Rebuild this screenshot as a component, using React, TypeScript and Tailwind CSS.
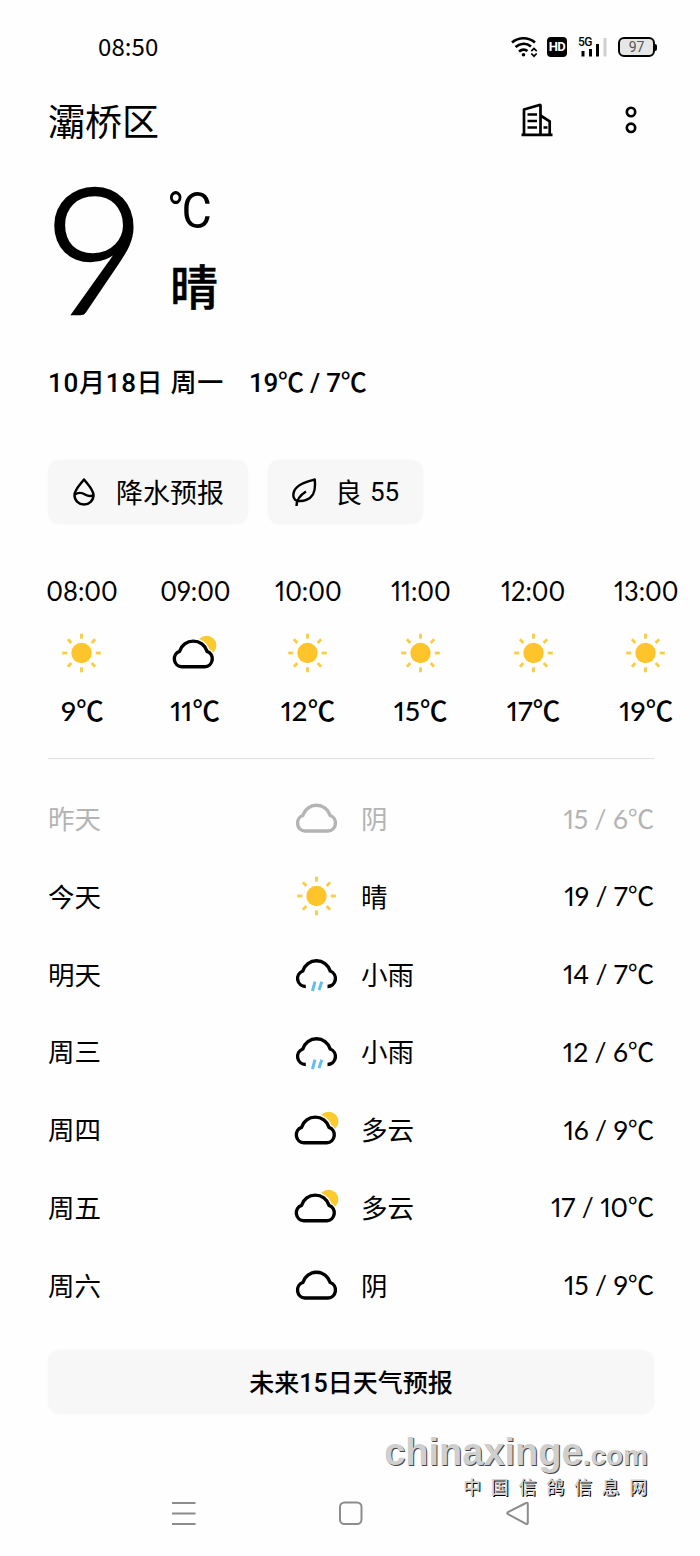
import { clsx } from "clsx";

type Weather = "sunny" | "cloudy" | "partly" | "rain";

interface Hour {
  time: string;
  weather: Weather;
  temp: string;
}

interface Day {
  name: string;
  weather: Weather;
  label: string;
  range: string;
  past?: boolean;
}

const HOURS: Hour[] = [
  { time: "08:00", weather: "sunny", temp: "9℃" },
  { time: "09:00", weather: "partly", temp: "11℃" },
  { time: "10:00", weather: "sunny", temp: "12℃" },
  { time: "11:00", weather: "sunny", temp: "15℃" },
  { time: "12:00", weather: "sunny", temp: "17℃" },
  { time: "13:00", weather: "sunny", temp: "19℃" },
];

const DAYS: Day[] = [
  { name: "昨天", weather: "cloudy", label: "阴", range: "15 / 6℃", past: true },
  { name: "今天", weather: "sunny", label: "晴", range: "19 / 7℃" },
  { name: "明天", weather: "rain", label: "小雨", range: "14 / 7℃" },
  { name: "周三", weather: "rain", label: "小雨", range: "12 / 6℃" },
  { name: "周四", weather: "partly", label: "多云", range: "16 / 9℃" },
  { name: "周五", weather: "partly", label: "多云", range: "17 / 10℃" },
  { name: "周六", weather: "cloudy", label: "阴", range: "15 / 9℃" },
];

const CLOUD = "M12 33H35A8 8 0 0 0 37.2 17.5A14.3 14.3 0 0 0 9.8 17.5A8 8 0 0 0 12 33Z";

function WeatherIcon({ type }: { type: Weather }) {
  return (
    <svg viewBox="0 0 48 40" className="h-10 w-12 shrink-0" fill="none">
      {type === "sunny" && (
        <g>
          <circle cx="23.5" cy="20" r="10.2" fill="#fdc52b" />
          {[0, 45, 90, 135, 180, 225, 270, 315].map(a => (
            <path key={a} d="M23.5 0.7v5" stroke="#f8cd46" strokeWidth="2.8" transform={`rotate(${a} 23.5 20)`} />
          ))}
        </g>
      )}
      {type === "cloudy" && <path d={CLOUD} stroke="currentColor" strokeWidth="3.4" />}
      {type === "partly" && (
        <g>
          <circle cx="35.6" cy="12.5" r="9.8" fill="#fbca2e" />
          <g transform="translate(-1.2 0.8)">
            <path d={CLOUD} fill="white" stroke="white" strokeWidth="6" />
            <path d={CLOUD} stroke="currentColor" strokeWidth="3.4" />
          </g>
        </g>
      )}
      {type === "rain" && (
        <g transform="translate(0 -0.5)">
          <path d="M34.5 33A8 8 0 0 0 37.2 17.5A14.3 14.3 0 0 0 9.8 17.5A8 8 0 0 0 12.8 33" stroke="currentColor" strokeWidth="3.4" />
          <path d="M22 28.2l-2.6 9.4M28.8 28.2l-2.8 8.4" stroke="#63bdf0" strokeWidth="3" />
        </g>
      )}
    </svg>
  );
}

function StatusBar() {
  return (
    <div className="flex h-[94px] items-center justify-between pl-[98px] pr-[43px]">
      <span className="-mt-[2px] font-['Noto_Sans_CJK_SC',sans-serif] text-[24px] tracking-[0.1px]">08:50</span>
      <div className="flex items-center">
        <svg viewBox="0 0 27 22" className="h-[22px] w-[27px]" fill="none" stroke="black" strokeWidth="2.7">
          <path d="M1 6.5C7.5.8 17.500.8 24 6.500M4.500 11C9.500 7 15.500 7 20 10.500M8 15.500c3-2.400 6-2.400 8.500-.5" />
          <circle cx="12.500" cy="18.800" r="1.800" fill="black" stroke="none" />
          <path d="M20.300 15.200l2.700-2.700 2.700 2.700M20.300 17.500l2.700 2.700 2.700-2.700" strokeWidth="1.700" />
        </svg>
        <span className="ml-[9px] flex h-5 w-5 items-center justify-center rounded-[4px] bg-black font-['Roboto',sans-serif] text-[13px] font-bold tracking-[-0.5px] text-white">
          HD
        </span>
        <div className="relative ml-[11px] h-[22px] w-[29px]">
          <span className="absolute top-0 left-0 font-['Roboto',sans-serif] text-[12px] leading-[12px] font-medium tracking-[-0.5px]">5G</span>
          <svg viewBox="0 0 29 22" className="h-full w-full">
            <path d="M5 15v5.500M12.500 13v7.500M19.500 8v12.500" stroke="black" strokeWidth="3" />
            <path d="M27 2v18.500" stroke="#d0d0d0" strokeWidth="3" />
          </svg>
        </div>
        <div className="ml-[11px] flex items-center">
          <span className="flex h-5 w-[37px] items-center justify-center rounded-[6px] border-2 border-black bg-[#e6e6e6] font-['Roboto',sans-serif] text-[14px] text-[#555]">
            97
          </span>
          <span className="h-[7px] w-[2px] rounded-r-sm bg-black" />
        </div>
      </div>
    </div>
  );
}

function Header() {
  return (
    <div className="flex h-[54px] items-center pr-[63px] pl-12">
      <h1 className="-mt-[2px] flex-1 text-[37px] leading-none font-normal">灞桥区</h1>
      <svg viewBox="0 0 32 34" className="-mt-[2px] h-[34px] w-8" fill="none" stroke="black" strokeWidth="2.700" strokeLinejoin="round">
        <path d="M.5 31.800h31M3 31.500V6.500L18.500 2q1-.3 1 .8v28.700M19.500 12.500l9.200 5.800v13.200" />
        <path d="M6.500 11.500h9.500M6.500 18h9.500M6.500 24.500h9.500M22.500 24.500h4" strokeWidth="2.400" />
      </svg>
      <svg viewBox="0 0 12 28" className="-mt-[2px] ml-[72px] h-7 w-3" fill="none" stroke="black" strokeWidth="2.600">
        <circle cx="6" cy="6" r="4.200" />
        <circle cx="6" cy="21.800" r="4.200" />
      </svg>
    </div>
  );
}

function Current() {
  return (
    <div className="flex h-[205px] pl-[44px]">
      <span className="mt-[10px] w-[123px] font-['Lato',sans-serif] text-[175px] leading-[177px] font-light [-webkit-text-stroke:2.5px_black]">9</span>
      <div className="flex flex-col pt-[37px]">
        <span className="origin-left scale-x-93 font-['Roboto',sans-serif] text-[50px] leading-[52px] tracking-[-3px]">°C</span>
        <span className="mt-[23px] ml-[3px] text-[48px] leading-[48px] font-medium [-webkit-text-stroke:0.5px_black]">晴</span>
      </div>
    </div>
  );
}

function Chips() {
  return (
    <div className="flex gap-5 pl-12">
      <button className="flex h-16 w-[200px] items-center rounded-xl bg-[#f7f7f7] pl-[25px] shadow-[0_0_3px_#f7f7f7]">
        <svg viewBox="0 0 24 30" className="h-[30px] w-6" fill="none" stroke="black" strokeWidth="2.500" strokeLinejoin="round">
          <path d="M11 2.500C7.500 7 1.500 12.500 1.500 18.200a9.500 9.300 0 0 0 19 0C20.500 12.500 14.500 7 11 2.500Z" />
          <path d="M2 17.500c4.500-3 7.500-1.500 10.500.3s5 1.800 8 .2" />
        </svg>
        <span className="ml-[19px] text-[27px]">降水预报</span>
      </button>
      <button className="flex h-16 w-[155px] items-center rounded-xl bg-[#f7f7f7] pl-[24px] shadow-[0_0_3px_#f7f7f7]">
        <svg viewBox="0 0 26 30" className="h-[30px] w-[26px]" fill="none" stroke="black" strokeWidth="2.400" strokeLinejoin="round">
          <path d="M22.700 2.500C15.500 4.500 5 7 2 14.500c-1.500 4.500-.3 8.500 3.500 9.300 6 1 12.500-1.500 15.500-6.500 2.500-4.500 2.300-9.500 1.700-14.800Z" />
          <path d="M4.500 29c0-6 3-10.500 9.500-14.500" />
        </svg>
        <span className="ml-[17px] text-[27px]">良</span>
        <span className="ml-[8px] font-['Roboto',sans-serif] text-[26px]">55</span>
      </button>
    </div>
  );
}

function Hourly() {
  return (
    <div className="ml-[26px] flex h-[182px]">
      {HOURS.map(h => (
        <div key={h.time} className="flex w-[112.8px] shrink-0 flex-col items-center font-['Lato','Noto_Sans_CJK_SC',sans-serif] proportional-nums">
          <span className="scale-x-94 text-[27px] leading-[30px]">{h.time}</span>
          <div className="mt-[27px] mb-[23px]">
            <WeatherIcon type={h.weather} />
          </div>
          <span className="text-[27.5px] leading-[30px] font-medium tracking-[0.2px]">{h.temp}</span>
        </div>
      ))}
    </div>
  );
}

function Daily() {
  return (
    <div className="mt-[21px] pr-[46px] pl-12">
      {DAYS.map(d => (
        <div key={d.name} className={clsx("flex h-[77.75px] items-center text-[26.5px]", d.past && "text-[#b4b4b4]")}>
          <span className="-mt-[2px] w-[245px]">{d.name}</span>
          <div className="-mt-px">
            <WeatherIcon type={d.weather} />
          </div>
          <span className="-mt-[2px] ml-[20px] flex-1">{d.label}</span>
          <span className="mt-px font-['Lato','Noto_Sans_CJK_SC',sans-serif] text-[26.5px] tracking-[-0.2px] proportional-nums">{d.range}</span>
        </div>
      ))}
    </div>
  );
}

function NavBar() {
  return (
    <div className="mt-[84px] flex h-[30px] items-center pl-[171px] text-[#8c8c8c]">
      <svg viewBox="0 0 25 25" className="h-[25px] w-[25px]" fill="none" stroke="currentColor" strokeWidth="2">
        <path d="M1 2h23.500M1 12.500h23.500M1 23h23.500" />
      </svg>
      <svg viewBox="0 0 25 25" className="ml-[142px] h-[25px] w-[25px]" fill="none" stroke="currentColor" strokeWidth="2">
        <rect x="2" y="1.500" width="21.500" height="21.500" rx="4.500" />
      </svg>
      <svg viewBox="0 0 25 25" className="ml-[143px] h-[25px] w-[25px]" fill="none" stroke="currentColor" strokeWidth="2" strokeLinejoin="round">
        <path d="M2 11.200Q.5 12.200 2 13.200L20 22.800q1.800.8 1.800-1V3q0-2-1.800-1Z" />
      </svg>
    </div>
  );
}

function Watermark() {
  return (
    <div className="absolute top-[1430px] right-[52px] flex flex-col items-end text-[#cfcfcf]">
      <div className="font-['Liberation_Sans',sans-serif] text-[38px] leading-[44px] font-bold [text-shadow:1px_1px_0_#444]">
        chinaxinge<span className="text-[28px]">.com</span>
      </div>
      <div className="-mt-[2px] -mr-[9px] text-[18px] leading-[20px] font-medium tracking-[9.700px] [text-shadow:1px_1px_0_#000]">
        中国信鸽信息网
      </div>
    </div>
  );
}

export default function App() {
  return (
    <div className="relative h-[1556px] w-[700px] overflow-hidden bg-[#fefefe] font-['Noto_Sans_CJK_SC',sans-serif] text-black">
      <StatusBar />
      <Header />
      <Current />
      <div className="flex h-[60px] items-center pl-12 font-['Roboto','Noto_Sans_CJK_SC',sans-serif] text-[26px] font-medium whitespace-pre">
        <span className="tracking-[0.7px]">10月18日 周一</span>
        <span className="ml-[25px] tracking-[-0.2px]">19℃ / 7℃</span>
      </div>
      <div className="h-[47px]" />
      <Chips />
      <div className="h-[52px]" />
      <Hourly />
      <div className="mr-[46px] ml-12 h-px bg-[#dedede]" />
      <Daily />
      <button className="mt-[26px] ml-12 block h-16 w-[606px] rounded-xl bg-[#f7f7f7] font-['Roboto','Noto_Sans_CJK_SC',sans-serif] text-[25px] font-medium shadow-[0_0_3px_#f7f7f7]">
        <span className="relative top-px">未来15日天气预报</span>
      </button>
      <NavBar />
      <Watermark />
    </div>
  );
}
